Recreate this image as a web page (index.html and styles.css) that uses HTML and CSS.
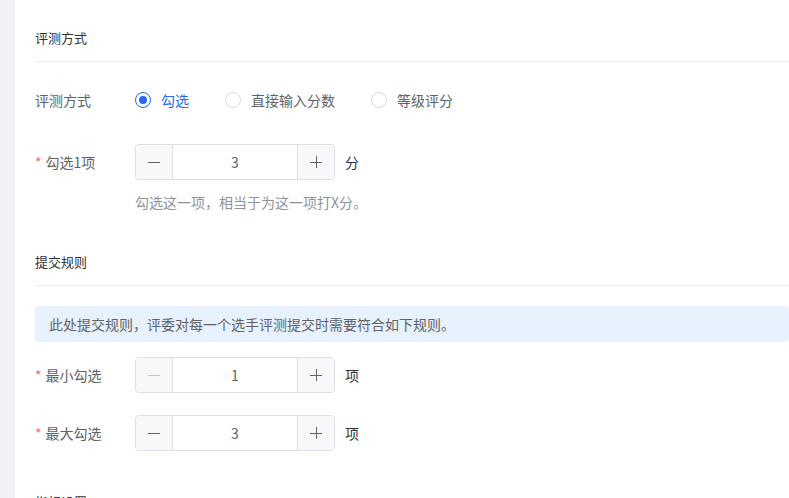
FILE: index.html
```html
<!DOCTYPE html>
<html lang="zh">
<head>
<meta charset="utf-8">
<title>评测方式</title>
<link rel="stylesheet" href="styles.css">
</head>
<body>
<div class="page">
  <div class="side"></div>
  <div class="main">
    <div class="sec-title">评测方式</div>

    <div class="form-item radio-row">
      <div class="label">评测方式</div>
      <div class="control radios">
        <label class="radio checked"><span class="dot"></span><span class="rtext">勾选</span></label>
        <label class="radio"><span class="dot"></span><span class="rtext">直接输入分数</span></label>
        <label class="radio"><span class="dot"></span><span class="rtext">等级评分</span></label>
      </div>
    </div>

    <div class="form-item">
      <div class="label"><span class="req">*</span>勾选1项</div>
      <div class="control">
        <div class="stepper-line">
          <div class="stepper">
            <span class="btn"><svg width="12" height="12" viewBox="0 0 12 12"><path d="M0 6.5H12" stroke="#606266" stroke-width="1"/></svg></span>
            <span class="val">3</span>
            <span class="btn btn-r"><svg width="12" height="12" viewBox="0 0 12 12"><path d="M0 6.5H12M6.5 0V12" stroke="#606266" stroke-width="1"/></svg></span>
          </div>
          <span class="unit">分</span>
        </div>
        <div class="hint">勾选这一项，相当于为这一项打X分。</div>
      </div>
    </div>

    <div class="sec-title sec-gap">提交规则</div>
    <div class="alert">此处提交规则，评委对每一个选手评测提交时需要符合如下规则。</div>

    <div class="form-item min-row">
      <div class="label"><span class="req">*</span>最小勾选</div>
      <div class="control">
        <div class="stepper-line">
          <div class="stepper">
            <span class="btn disabled"><svg width="12" height="12" viewBox="0 0 12 12"><path d="M0 6.5H12" stroke="#c0c4cc" stroke-width="1"/></svg></span>
            <span class="val">1</span>
            <span class="btn btn-r"><svg width="12" height="12" viewBox="0 0 12 12"><path d="M0 6.5H12M6.5 0V12" stroke="#606266" stroke-width="1"/></svg></span>
          </div>
          <span class="unit">项</span>
        </div>
      </div>
    </div>

    <div class="form-item">
      <div class="label"><span class="req">*</span>最大勾选</div>
      <div class="control">
        <div class="stepper-line">
          <div class="stepper">
            <span class="btn"><svg width="12" height="12" viewBox="0 0 12 12"><path d="M0 6.5H12" stroke="#606266" stroke-width="1"/></svg></span>
            <span class="val">3</span>
            <span class="btn btn-r"><svg width="12" height="12" viewBox="0 0 12 12"><path d="M0 6.5H12M6.5 0V12" stroke="#606266" stroke-width="1"/></svg></span>
          </div>
          <span class="unit">项</span>
        </div>
      </div>
    </div>

    <div class="sec-title sec-gap3">指标设置</div>
  </div>
</div>
</body>
</html>
```

FILE: styles.css
```css
html, body {
  margin: 0;
  padding: 0;
  background: #ffffff;
  overflow: hidden;
  height: 100%;
}
body {
  font-family: "Noto Sans CJK SC", "Noto Sans", sans-serif;
  font-size: 14px;
  color: #606266;
}
.page {
  display: flex;
  min-height: 100%;
}
.side {
  width: 15px;
  flex-shrink: 0;
  background: #f0f2f5;
}
.main {
  flex: 1;
  padding: 28px 0 0 20px;
}
.sec-title {
  font-size: 13px;
  line-height: 20px;
  color: #303133;
  padding-bottom: 13px;
  border-bottom: 1px solid #ebeef5;
  margin-bottom: 20px;
}
.sec-gap { margin-top: 40px; }
.sec-gap3 { margin-top: 41px; }
.form-item {
  display: flex;
  align-items: flex-start;
}
.radio-row { margin-bottom: 26px; }
.min-row { margin-bottom: 22px; }
.label {
  width: 100px;
  flex-shrink: 0;
  line-height: 36px;
  font-size: 14px;
  color: #606266;
}
.req {
  color: #f56c6c;
  margin-right: 4px;
}
.control { flex: 1; }
.radios {
  display: flex;
  align-items: center;
  height: 36px;
}
.radio {
  display: flex;
  align-items: center;
  margin-right: 36px;
  color: #606266;
  line-height: 20px;
}
.dot {
  width: 14px;
  height: 14px;
  border: 1px solid #d6d9e0;
  border-radius: 50%;
  box-sizing: content-box;
  position: relative;
  background: #fff;
}
.rtext { margin-left: 10px; }
.radio.checked .dot { border-color: #2468f2; }
.radio.checked .dot::after {
  content: "";
  position: absolute;
  left: 3px;
  top: 3px;
  width: 8px;
  height: 8px;
  border-radius: 50%;
  background: #2468f2;
}
.radio.checked .rtext { color: #2468f2; }
.stepper-line {
  display: flex;
  align-items: center;
}
.stepper {
  display: flex;
  width: 200px;
  height: 36px;
  box-sizing: border-box;
  border: 1px solid #dcdfe6;
  border-radius: 4px;
  overflow: hidden;
}
.btn {
  width: 36px;
  flex-shrink: 0;
  background: #f7f8fa;
  border-right: 1px solid #dcdfe6;
  display: flex;
  align-items: center;
  justify-content: center;
}
.btn-r {
  border-right: none;
  border-left: 1px solid #dcdfe6;
}
.val {
  flex: 1;
  text-align: center;
  line-height: 34px;
  color: #606266;
  font-size: 14px;
}
.unit {
  margin-left: 10px;
  color: #303133;
  font-size: 14px;
}
.hint {
  margin-top: 12px;
  line-height: 20px;
  font-size: 14px;
  color: #909399;
}
.alert {
  background: #e8f2fe;
  border-radius: 4px;
  line-height: 36px;
  padding-left: 14px;
  font-size: 14px;
  color: #606266;
  margin-bottom: 15px;
}
```
